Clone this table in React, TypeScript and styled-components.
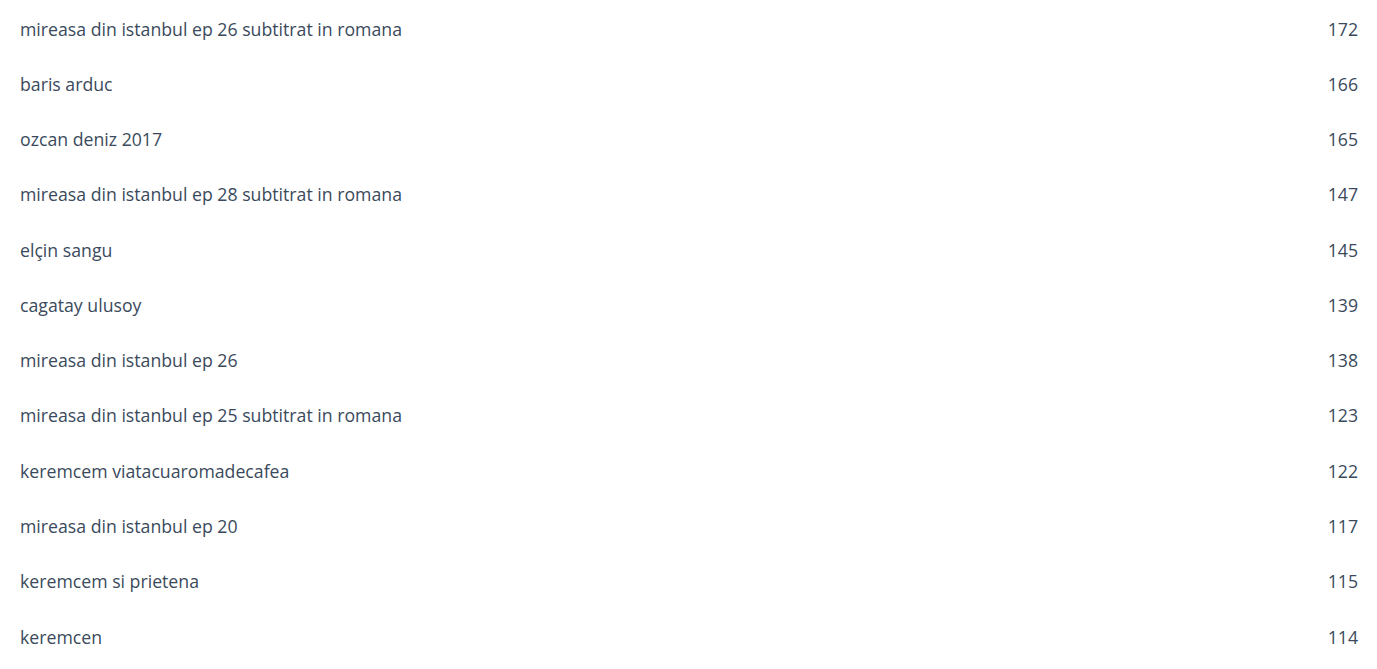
import React from "react";
import styled, { createGlobalStyle } from "styled-components";

const Global = createGlobalStyle`
  html, body { margin: 0; padding: 0; background: #ffffff; }
  body { font-family: "Open Sans", "Noto Sans", sans-serif; }
`;

const List = styled.ul`
  list-style: none;
  margin: 0;
  padding: 1px 19px 0 20px;
`;

const Row = styled.li`
  display: flex;
  align-items: center;
  justify-content: space-between;
  height: 55.27px;
  font-size: 17.7px;
  color: #3a4a5c;
`;

const Term = styled.span``;
const Count = styled.span``;

const data: [string, number][] = [
  ["mireasa din istanbul ep 26 subtitrat in romana", 172],
  ["baris arduc", 166],
  ["ozcan deniz 2017", 165],
  ["mireasa din istanbul ep 28 subtitrat in romana", 147],
  ["elçin sangu", 145],
  ["cagatay ulusoy", 139],
  ["mireasa din istanbul ep 26", 138],
  ["mireasa din istanbul ep 25 subtitrat in romana", 123],
  ["keremcem viatacuaromadecafea", 122],
  ["mireasa din istanbul ep 20", 117],
  ["keremcem si prietena", 115],
  ["keremcen", 114],
];

export default function App() {
  return (
    <>
      <Global />
      <List>
        {data.map(([t, n]) => (
          <Row key={t}>
            <Term>{t}</Term>
            <Count>{n}</Count>
          </Row>
        ))}
      </List>
    </>
  );
}
